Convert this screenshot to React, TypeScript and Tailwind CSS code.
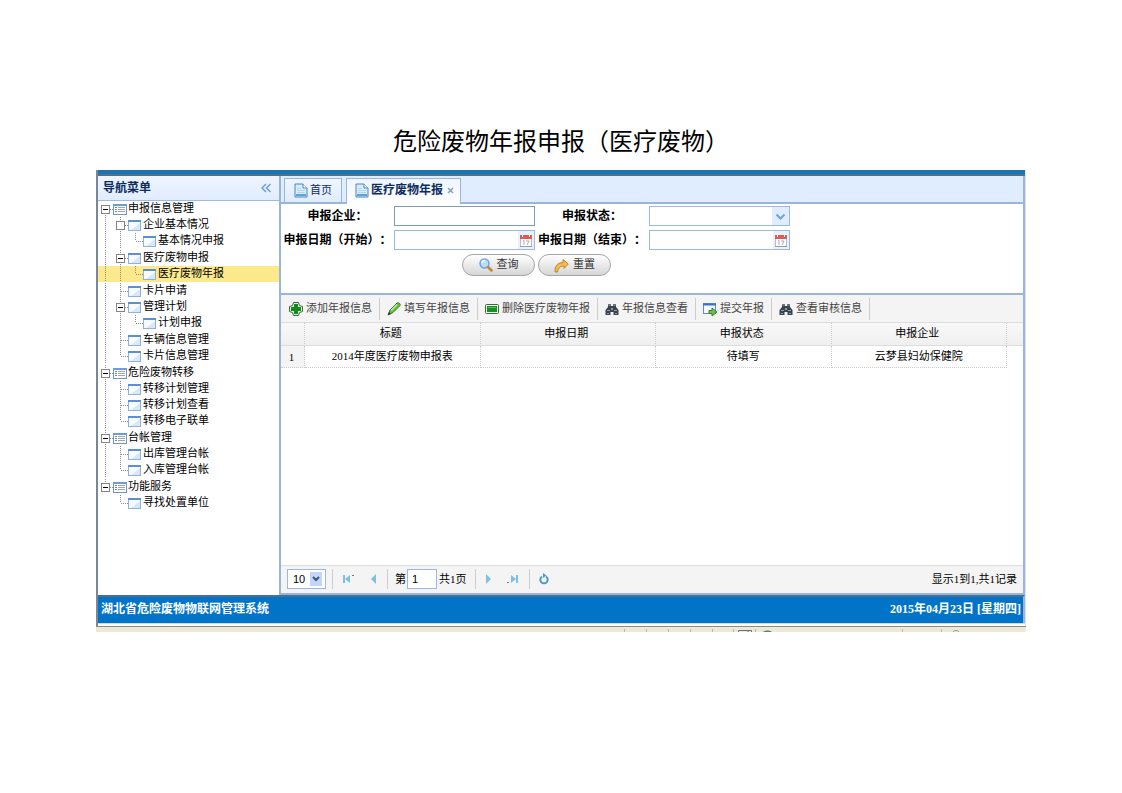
import { useState, type ReactNode } from "react";

type TreeNode = {
  text: string;
  noMinus?: boolean;
  children?: TreeNode[];
};

const menu: TreeNode[] = [
  {
    text: "申报信息管理",
    children: [
      { text: "企业基本情况", noMinus: true, children: [{ text: "基本情况申报" }] },
      { text: "医疗废物申报", children: [{ text: "医疗废物年报" }] },
      { text: "卡片申请" },
      { text: "管理计划", children: [{ text: "计划申报" }] },
      { text: "车辆信息管理" },
      { text: "卡片信息管理" },
    ],
  },
  {
    text: "危险废物转移",
    children: [{ text: "转移计划管理" }, { text: "转移计划查看" }, { text: "转移电子联单" }],
  },
  {
    text: "台帐管理",
    children: [{ text: "出库管理台帐" }, { text: "入库管理台帐" }],
  },
  { text: "功能服务", children: [{ text: "寻找处置单位" }] },
];

const ListIcon = () => (
  <svg width="15" height="16" viewBox="0 0 15 16" className="shrink-0">
    <rect x="0.5" y="3.5" width="13" height="10" fill="#fff" stroke="#7397c0" />
    <path d="M0 4h14" stroke="#6f9dd3" strokeWidth="2" />
    <path d="M2 6.5h2M2 8.5h2M2 10.5h2" stroke="#5b8cc4" />
    <path d="M5 6.5h7M5 8.5h7M5 10.5h7" stroke="#a5a5a5" />
  </svg>
);

const WindowIcon = () => (
  <svg width="15" height="16" viewBox="0 0 15 16" className="shrink-0">
    <rect x="0.5" y="3.5" width="12" height="10" fill="#f7fbff" stroke="#8fb2dc" />
    <path d="M0 4h13" stroke="#5b90d2" strokeWidth="2" />
    <path d="M3 13l9-7v7z" fill="#d8e8fa" />
  </svg>
);

const PageIcon = () => (
  <svg width="14" height="15" viewBox="0 0 14 15" className="shrink-0">
    <path d="M1 1h8l4 4v9H1z" fill="#d9ecfb" stroke="#4b86bd" />
    <path d="M9 1v4h4" fill="#fff" stroke="#4b86bd" />
    <path d="M3 5.5h4M3 7.5h8M3 9.5h8" stroke="#b5d6f0" />
    <path d="M2 12h10" stroke="#58a4dc" strokeWidth="2" />
  </svg>
);

const CalendarIcon = () => (
  <svg width="14" height="15" viewBox="0 0 14 15">
    <rect x="1.5" y="2.5" width="11" height="11" fill="#fdfdfd" stroke="#b9bcc4" />
    <path d="M1 2h12v4H1z" fill="#df5a50" />
    <path d="M3.5 1v3M10.5 1v3" stroke="#fff" />
    <path d="M4 8l1-.5V12M7 8h3l-2 4" fill="none" stroke="#a8adb8" />
    <path d="M1 13.5h12" stroke="#999ba3" />
  </svg>
);

const AddIcon = () => (
  <svg width="14" height="16" viewBox="0 0 14 16">
    <path d="M4.5 1.5h5l1 3 3 1v5l-3 1-1 3h-5l-1-3-3-1v-5l3-1z" fill="#e6f5e4" stroke="#2f6f35" />
    <path d="M7 3v10M2 8h10" stroke="#128a1c" strokeWidth="4" />
  </svg>
);

const PencilIcon = () => (
  <svg width="14" height="16" viewBox="0 0 14 16">
    <path d="M1 14l2-5 7-7c1.500-1 4 1 3 2.500l-7 7z" fill="#6bbf3b" stroke="#2e7d22" />
    <path d="M4 9.500l6-6" stroke="#c8efa2" strokeWidth="1.500" />
    <path d="M1 14l1-3 2 2z" fill="#333" />
  </svg>
);

const RemoveIcon = () => (
  <svg width="14" height="16" viewBox="0 0 14 16">
    <rect x="0.5" y="3.5" width="13" height="9" rx="1" fill="#fff" stroke="#2f6f35" />
    <rect x="2" y="5" width="10" height="6" fill="#14921f" />
    <path d="M3 6.500h8" stroke="#58bd55" />
  </svg>
);

const BinocularsIcon = () => (
  <svg width="14" height="16" viewBox="0 0 14 16">
    <path d="M3 4h3v1h2V4h3v2l2.500 3v5H8.500v-3h-3v3h-5V9L3 6z" fill="#3b434d" />
    <path d="M3 4h3M8 4h3" stroke="#6b7681" strokeWidth="2" />
    <path d="M2 9.500h3M9 9.500h3M2 12.500h2M10 12.500h2" stroke="#8fa2b6" />
    <path d="M6 8h2" stroke="#8d9aa8" strokeWidth="2" />
  </svg>
);

const SubmitIcon = () => (
  <svg width="14" height="16" viewBox="0 0 14 16">
    <rect x="0.5" y="2.500" width="12" height="10" fill="#f4f9ff" stroke="#5f8fc9" />
    <path d="M0 3.500h13" stroke="#3a73c2" strokeWidth="2" />
    <path d="M6 9.500h3V7l5 4-5 4v-2.500H6z" fill="#6fbf4a" stroke="#3a7d2a" />
  </svg>
);

const SearchIcon = () => (
  <svg width="14" height="14" viewBox="0 0 14 14">
    <circle cx="5.500" cy="5.500" r="4.500" fill="#b9dcfb" stroke="#6fa4dc" strokeWidth="1.500" />
    <path d="M3 5a3 3 0 0 1 3-2.500" fill="none" stroke="#fff" strokeWidth="1.500" />
    <path d="M9 9l3.500 3.500" stroke="#c9803a" strokeWidth="2.500" strokeLinecap="round" />
  </svg>
);

const RedoIcon = () => (
  <svg width="15" height="15" viewBox="0 0 15 15">
    <path d="M1 14c0-6 2-9 8-9.500V1.500L14.300 6 10 10.500V8C6 8 4.500 10 3.500 14z" fill="#f6bb4a" stroke="#b98632" />
  </svg>
);

// one 15px cell of the dotted guide lines
const Guide = ({ kind }: { kind: "line" | "join" | "last" | "blank" }) => (
  <svg width="15" height="16" viewBox="0 0 15 16" className="shrink-0">
    <g stroke="#8a8a8a" strokeDasharray="1 1">
      {kind === "line" && <path d="M7.500 0v16" />}
      {kind === "join" && <path d="M7.500 0v16M8 8.500h7" />}
      {kind === "last" && <path d="M7.500 0v8M8 8.500h7" />}
    </g>
  </svg>
);

const Toggler = ({ minus, first, last }: { minus: boolean; first: boolean; last: boolean }) => (
  <svg width="15" height="16" viewBox="0 0 15 16" className="shrink-0">
    <path d={`M7.500 ${first ? 8 : 0}V${last ? 8 : 16}M8 8.500h7`} stroke="#8a8a8a" strokeDasharray="1 1" />
    <rect x="3.500" y="4.500" width="8" height="8" fill="#fff" stroke="#848484" />
    {minus && <path d="M5 8.500h5" stroke="#000" />}
  </svg>
);

type BranchProps = {
  nodes: TreeNode[];
  guides?: boolean[];
  selected: string;
  onSelect: (text: string) => void;
};

const Branch = ({ nodes, guides = [], selected, onSelect }: BranchProps) => (
  <ul className={guides.length ? "pb-px" : ""}>
    {nodes.map((node, i) => {
      const last = i === nodes.length - 1;
      return (
        <li key={node.text}>
          <a
            href="#"
            onClick={(e) => {
              e.preventDefault();
              onSelect(node.text);
            }}
            className={`flex h-4 items-center whitespace-nowrap ${selected === node.text ? "bg-[#fbe98b]" : ""}`}
          >
            {guides.map((on, g) => (
              <Guide key={g} kind={on ? "line" : "blank"} />
            ))}
            {node.children ? (
              <Toggler minus={!node.noMinus} first={!guides.length && i === 0} last={last} />
            ) : (
              <Guide kind={last ? "last" : "join"} />
            )}
            {guides.length ? <WindowIcon /> : <ListIcon />}
            <span className="pb-[2px]">{node.text}</span>
          </a>
          {node.children && (
            <Branch
              nodes={node.children}
              guides={[...guides, !last]}
              selected={selected}
              onSelect={onSelect}
            />
          )}
        </li>
      );
    })}
  </ul>
);

const ToolButton = ({ icon, children }: { icon: ReactNode; children: ReactNode }) => (
  <button
    type="button"
    className="flex h-[22px] items-center gap-[3px] border-r border-[#cccccc] px-[7px] whitespace-nowrap text-[#444444]"
  >
    {icon}
    <span className="pb-[2px]">{children}</span>
  </button>
);

const PillButton = ({ icon, children }: { icon: ReactNode; children: ReactNode }) => (
  <button
    type="button"
    className="flex h-[22px] w-[73px] items-center justify-center gap-1 rounded-full border border-[#a5a5a5] bg-linear-to-b from-white to-[#d6d6d6] text-[#333333]"
  >
    {icon}
    <span className="pb-[2px]">{children}</span>
  </button>
);

const DateField = ({ id }: { id: string }) => (
  <div className="flex h-5 items-center border border-[#9ab8e0] bg-white">
    <input id={id} type="text" className="h-full min-w-0 flex-1 px-1 outline-none" />
    <button type="button" aria-label="选择日期" className="flex h-full w-4 items-center justify-center bg-[#e8f1fc]">
      <CalendarIcon />
    </button>
  </div>
);

const PagerButton = ({ label, d, dot }: { label: string; d: string; dot?: string }) => (
  <button type="button" aria-label={label} className="flex size-6 items-center justify-center">
    <svg width="14" height="12" viewBox="0 0 14 12">
      <path d={d} fill="#7fbfe2" />
      {dot && <path d={dot} fill="#777" />}
    </svg>
  </button>
);

const Separator = () => <span className="h-5 w-px bg-[#cccccc]" />;

export default function App() {
  const [selected, setSelected] = useState("医疗废物年报");

  return (
    <div className="bg-white px-24 pt-[122px] pb-40 font-['Liberation_Serif','Noto_Sans_CJK_SC',sans-serif] text-[11px] leading-4 text-black [text-spacing-trim:space-all]">
      <h1 className="h-12 text-center text-[24px] leading-10">危险废物年报申报（医疗废物）</h1>

      <div className="border-r border-l-2 border-r-[#dbe6f4] border-l-[#7a8797]">
        <div className="h-1 bg-[#1b74b4]" />
        <div className="h-[2px] bg-[#4f6f8f]" />

        <div className="flex min-h-[419px] border-r-2 border-[#99b5da]">
          <nav className="w-[181px] shrink-0 bg-white">
            <div className="flex h-[25px] items-center justify-between border-b border-[#99bbe8] bg-linear-to-b from-[#eff5ff] to-[#e0ecff] pr-2 pl-[5px]">
              <h2 className="text-[12px] font-bold text-[#0e2d5f]">导航菜单</h2>
              <button type="button" aria-label="收起菜单">
                <svg width="10" height="10" viewBox="0 0 10 10" fill="none" stroke="#6aa0dc" strokeWidth="1.500">
                  <path d="M5 1L1 5l4 4M9.500 1l-4 4 4 4" />
                </svg>
              </button>
            </div>
            <Branch nodes={menu} selected={selected} onSelect={setSelected} />
          </nav>

          <main className="flex min-w-0 flex-1 flex-col border-b-2 border-l-2 border-[#99b5da]">
            <div className="flex h-7 gap-1 border-b-2 border-[#99b5da] bg-[#e0ecff] pt-[2px] pl-[3px]">
              <button
                type="button"
                className="flex h-6 w-[58px] items-center justify-center gap-[2px] border border-b-0 border-[#99b5da] bg-linear-to-b from-[#eff5ff] to-[#e0ecff] text-[#0e2d5f]"
              >
                <PageIcon />
                <span className="pb-[2px]">首页</span>
              </button>
              <div className="flex h-[26px] items-center gap-1 border border-b-0 border-[#99b5da] bg-linear-to-b from-[#eff5ff] to-white pr-[6px] pb-[2px] pl-2">
                <button type="button" className="flex items-center gap-[2px] text-[12px] font-bold text-[#0e2d5f]">
                  <PageIcon />
                  <span className="pb-[2px]">医疗废物年报</span>
                </button>
                <button type="button" aria-label="关闭">
                  <svg width="7" height="7" viewBox="0 0 7 7" stroke="#7f9fc9" strokeWidth="1.500">
                    <path d="M1 1l5 5M6 1L1 6" />
                  </svg>
                </button>
              </div>
            </div>

            <form className="grid h-[91px] grid-cols-[113px_141px_114px_141px] content-start gap-y-1 border-b-2 border-[#99b5da] pt-[2px]">
              <label htmlFor="company" className="text-center text-[12px] leading-5 font-bold">
                申报企业：
              </label>
              <input id="company" type="text" className="h-5 min-w-0 border border-[#7f9db9] px-1 outline-none" />
              <label htmlFor="status" className="text-center text-[12px] leading-5 font-bold">
                申报状态：
              </label>
              <div className="relative h-5 border border-[#9ab8e0]">
                <select id="status" className="size-full appearance-none bg-white px-1 outline-none">
                  <option value=""></option>
                </select>
                <span className="pointer-events-none absolute inset-y-0 right-0 flex w-[17px] items-center justify-center bg-[#e0ecff]">
                  <svg width="9" height="7" viewBox="0 0 9 7" fill="none" stroke="#6aa9d6" strokeWidth="2">
                    <path d="M.5 1.500l4 4 4-4" />
                  </svg>
                </span>
              </div>
              <label htmlFor="start" className="text-center text-[12px] leading-5 font-bold whitespace-nowrap">
                申报日期（开始）：
              </label>
              <DateField id="start" />
              <label htmlFor="end" className="text-center text-[12px] leading-5 font-bold whitespace-nowrap">
                申报日期（结束）：
              </label>
              <DateField id="end" />
              <div className="col-span-4 flex justify-center gap-[3px] pl-[2px]">
                <PillButton icon={<SearchIcon />}>查询</PillButton>
                <PillButton icon={<RedoIcon />}>重置</PillButton>
              </div>
            </form>

            <div className="flex h-[27px] items-center bg-[#f4f4f4] pl-px">
              <ToolButton icon={<AddIcon />}>添加年报信息</ToolButton>
              <ToolButton icon={<PencilIcon />}>填写年报信息</ToolButton>
              <ToolButton icon={<RemoveIcon />}>删除医疗废物年报</ToolButton>
              <ToolButton icon={<BinocularsIcon />}>年报信息查看</ToolButton>
              <ToolButton icon={<SubmitIcon />}>提交年报</ToolButton>
              <ToolButton icon={<BinocularsIcon />}>查看审核信息</ToolButton>
            </div>

            <div className="flex-1">
              <table className="w-full table-fixed border-separate border-spacing-0 text-center">
                <colgroup>
                  <col className="w-6" />
                  <col />
                  <col />
                  <col />
                  <col />
                  <col className="w-4" />
                </colgroup>
                <thead>
                  <tr className="h-6 bg-linear-to-b from-[#f9f9f9] to-[#efefef]">
                    <th className="border-t border-r border-b border-[#dddddd] border-r-[#cccccc] [border-right-style:dotted]"></th>
                    {["标题", "申报日期", "申报状态", "申报企业"].map((title) => (
                      <th
                        key={title}
                        className="border-t border-r border-b border-[#dddddd] border-r-[#cccccc] p-0 pr-[3px] pb-[2px] font-normal [border-right-style:dotted]"
                      >
                        {title}
                      </th>
                    ))}
                    <th className="border-t border-b border-[#dddddd]"></th>
                  </tr>
                </thead>
                <tbody>
                  <tr className="h-[22px]">
                    <td className="border-r border-b border-dotted border-[#cccccc] bg-[#f4f4f4] p-0 pr-[2px]">1</td>
                    {["2014年度医疗废物申报表", "", "待填写", "云梦县妇幼保健院"].map((cell, i) => (
                      <td key={i} className="border-r border-b border-dotted border-[#cccccc] p-0 pb-[2px]">
                        {cell}
                      </td>
                    ))}
                    <td className="p-0"></td>
                  </tr>
                </tbody>
              </table>
            </div>

            <div className="flex h-[28px] items-center justify-between border-t border-[#dddddd] bg-[#f4f4f4] px-[6px] pb-px">
              <div className="flex items-center">
                <div className="relative mr-[6px] h-5 w-[39px] border border-[#9ab8e0]">
                  <select
                    aria-label="每页条数"
                    className="size-full appearance-none bg-white pl-[5px] font-['Liberation_Sans',sans-serif] text-[11px] leading-4 outline-none"
                  >
                    <option>10</option>
                  </select>
                  <span className="pointer-events-none absolute inset-y-[2px] right-[3px] flex w-3 items-center justify-center bg-[#c2d5fc]">
                    <svg width="8" height="6" viewBox="0 0 8 6" fill="none" stroke="#3d567f" strokeWidth="2">
                      <path d="M1 1l3 3 3-3" />
                    </svg>
                  </span>
                </div>
                <Separator />
                <div className="flex pr-[2px] pl-1">
                  <PagerButton label="首页" d="M1 2h2v8H1zM8 2v8L3 6z" dot="M10 2h2v1h-2z" />
                  <PagerButton label="上一页" d="M10 1v10L5 6z" />
                </div>
                <Separator />
                <label htmlFor="page" className="pr-px pl-[7px]">
                  第
                </label>
                <input
                  id="page"
                  type="text"
                  defaultValue="1"
                  className="h-5 w-[30px] border border-[#9ab8e0] bg-white px-1 font-['Liberation_Sans',sans-serif] outline-none"
                />
                <span className="pr-2 pl-[2px]">共1页</span>
                <Separator />
                <div className="flex pr-1 pl-px">
                  <PagerButton label="下一页" d="M4 1v10l5-5z" />
                  <PagerButton label="末页" d="M10 2h2v8h-2zM5 2v8l5-4z" dot="M1 9h2v1H1z" />
                </div>
                <Separator />
                <button type="button" aria-label="刷新" className="ml-[2px] flex size-6 items-center justify-center">
                  <svg width="10" height="12" viewBox="0 0 10 12" fill="none" stroke="#4a9bc9" strokeWidth="2">
                    <path d="M3 3.500a3.700 3.700 0 1 0 4 0" />
                    <path d="M4 0l3.500 2.500L4 5z" fill="#4a9bc9" stroke="none" />
                  </svg>
                </button>
              </div>
              <span>显示1到1,共1记录</span>
            </div>
          </main>
        </div>

        <footer className="flex h-[28px] items-center justify-between border-t-2 border-r-2 border-t-[#4a6f93] border-r-[#99b5da] bg-[#0274c8] pr-[2px] pb-[3px] pl-[3px] text-[12px] font-bold text-white">
          <span>湖北省危险废物物联网管理系统</span>
          <span>2015年04月23日 [星期四]</span>
        </footer>
        <div className="h-px bg-[#c4ddf2]" />
        <div className="h-[2px] bg-white" />
      </div>
      {/* top edge of the browser's status bar */}
      <div className="flex h-[6px] justify-end border-t border-[#8f8c80] bg-[#ece9d8]">
        <svg width="404" height="5" viewBox="0 0 404 5" fill="none">
          <path d="M2.500 2v3M24.500 2v3M46.500 2v3M68.500 2v3M90.500 2v3M111.500 2v3M133.500 2v3M280.500 2v3M319.500 2v3" stroke="#bdb9a6" />
          <path d="M116.500 5V3.500h13V5M126 3v2" stroke="#6d7078" />
          <path d="M141 5c2-2 7-2 9 0z" fill="#56837c" />
          <path d="M331 5c1-2 5-2 6 0" stroke="#8b9a94" />
        </svg>
      </div>
    </div>
  );
}
